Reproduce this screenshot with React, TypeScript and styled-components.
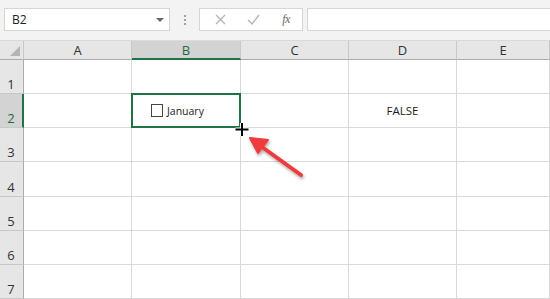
import React from "react";
import styled, { createGlobalStyle } from "styled-components";

const Global = createGlobalStyle`
  html, body { margin: 0; padding: 0; background: #ffffff; }
  body { font-family: "Segoe UI", "Open Sans", "Noto Sans", sans-serif; overflow: hidden; }
`;

const Page = styled.div`
  position: relative;
  width: 550px;
  height: 299px;
  overflow: hidden;
  background: #fff;
`;

const Toolbar = styled.div`
  height: 41px;
  background: #f3f3f3;
  display: flex;
  align-items: flex-start;
  padding: 8px 0 0 4px;
  box-sizing: border-box;
  border-bottom: 1px solid #dadada;
`;

const NameBox = styled.div`
  width: 166px;
  height: 23px;
  box-sizing: border-box;
  background: #fff;
  border: 1px solid #d6d6d6;
  display: flex;
  align-items: center;
  justify-content: space-between;
  padding: 0 5px 0 7px;
  font-size: 12px;
  color: #222;
`;

const Caret = styled.span`
  width: 0;
  height: 0;
  border-left: 4px solid transparent;
  border-right: 4px solid transparent;
  border-top: 4px solid #666;
`;

const Dots = styled.div`
  width: 29px;
  height: 23px;
  display: flex;
  flex-direction: column;
  align-items: center;
  justify-content: center;
  gap: 2px;
  span { width: 2px; height: 2px; background: #a0a0a0; display: block; }
`;

const ButtonsBox = styled.div`
  width: 104px;
  height: 23px;
  box-sizing: border-box;
  background: #fff;
  border: 1px solid #d6d6d6;
  display: flex;
  align-items: center;
  padding-left: 7px;
`;

const IconBtn = styled.div<{ $w: number }>`
  width: ${(p) => p.$w}px;
  height: 21px;
  display: flex;
  align-items: center;
  justify-content: center;
`;

const Fx = styled.span`
  font-family: "Liberation Serif", serif;
  font-style: italic;
  font-size: 12px;
  color: #666;
  letter-spacing: -0.5px;
`;

const FormulaInput = styled.div`
  flex: 1;
  height: 23px;
  margin-left: 4px;
  box-sizing: border-box;
  background: #fff;
  border: 1px solid #d6d6d6;
  border-right: none;
`;

const Grid = styled.div`
  display: grid;
  grid-template-columns: 24px 108px 109px 108px 108px 1fr;
  grid-template-rows: 19px 34px 34px 34px 35px 34px 34px 34px;
`;

const Corner = styled.div`
  position: relative;
  background: #e6e6e6;
  border-right: 1px solid #c8c8c8;
  border-bottom: 1px solid #ababab;
  box-sizing: border-box;
  &::after {
    content: "";
    position: absolute;
    right: 3px;
    bottom: 3px;
    width: 0;
    height: 0;
    border-left: 10px solid transparent;
    border-bottom: 10px solid #b5b5b5;
  }
`;

const ColHeader = styled.div<{ $sel?: boolean }>`
  background: ${(p) => (p.$sel ? "#d3d3d3" : "#e6e6e6")};
  border-right: 1px solid #c8c8c8;
  border-bottom: ${(p) => (p.$sel ? "2px solid #217346" : "1px solid #ababab")};
  box-sizing: border-box;
  display: flex;
  align-items: center;
  justify-content: center;
  font-size: 13px;
  color: ${(p) => (p.$sel ? "#1e6b41" : "#333")};
  padding-top: ${(p) => (p.$sel ? "1px" : "0")};
`;

const RowHeader = styled.div<{ $sel?: boolean }>`
  background: ${(p) => (p.$sel ? "#d3d3d3" : "#e6e6e6")};
  border-right: ${(p) => (p.$sel ? "2px solid #217346" : "1px solid #ababab")};
  border-bottom: 1px solid #c8c8c8;
  box-sizing: border-box;
  display: flex;
  align-items: flex-end;
  justify-content: center;
  padding-right: ${(p) => (p.$sel ? "0" : "1px")};
  font-size: 13px;
  color: ${(p) => (p.$sel ? "#1e6b41" : "#333")};
`;

const Cell = styled.div<{ $align?: string }>`
  position: relative;
  border-right: 1px solid #d9d9d9;
  border-bottom: 1px solid #d9d9d9;
  box-sizing: border-box;
  display: flex;
  align-items: center;
  justify-content: ${(p) => p.$align || "flex-start"};
  font-family: "Open Sans", "Liberation Sans", sans-serif;
  font-size: 11.5px;
  color: #1a1a1a;
`;

const Selection = styled.div`
  position: absolute;
  left: -1px;
  top: -1px;
  right: -1px;
  bottom: -1px;
  border: 2px solid #217346;
  pointer-events: none;
`;

const CheckWrap = styled.div`
  display: flex;
  align-items: center;
  gap: 4px;
  margin-left: 19px;
  font-size: 10.5px;
  color: #222;
`;

const Box = styled.span`
  width: 10px;
  height: 11px;
  border: 1px solid #444;
  display: block;
`;

const Overlay = styled.svg`
  position: absolute;
  left: 0;
  top: 0;
  pointer-events: none;
`;

const cols = ["A", "B", "C", "D", "E"];
const rows = [1, 2, 3, 4, 5, 6, 7];

export default function App() {
  return (
    <Page>
      <Global />
      <Toolbar>
        <NameBox>
          <span>B2</span>
          <Caret />
        </NameBox>
        <Dots>
          <span />
          <span />
          <span />
        </Dots>
        <ButtonsBox>
          <IconBtn $w={26}>
            <svg width="11" height="11" viewBox="0 0 11 11">
              <path d="M1 1 L10 10 M10 1 L1 10" stroke="#b4b4b4" strokeWidth="1.3" />
            </svg>
          </IconBtn>
          <IconBtn $w={40}>
            <svg width="13" height="11" viewBox="0 0 13 11">
              <path d="M1 6 L5 10 L12 1" stroke="#b4b4b4" strokeWidth="1.3" fill="none" />
            </svg>
          </IconBtn>
          <IconBtn $w={26}>
            <Fx>fx</Fx>
          </IconBtn>
        </ButtonsBox>
        <FormulaInput />
      </Toolbar>
      <Grid>
        <Corner />
        {cols.map((c) => (
          <ColHeader key={c} $sel={c === "B"}>
            {c}
          </ColHeader>
        ))}
        {rows.map((r) => (
          <React.Fragment key={r}>
            <RowHeader $sel={r === 2}>{r}</RowHeader>
            {cols.map((c) => {
              if (r === 2 && c === "B") {
                return (
                  <Cell key={c}>
                    <CheckWrap>
                      <Box />
                      <span>January</span>
                    </CheckWrap>
                    <Selection />
                  </Cell>
                );
              }
              if (r === 2 && c === "D") {
                return (
                  <Cell key={c} $align="center">
                    FALSE
                  </Cell>
                );
              }
              return <Cell key={c} />;
            })}
          </React.Fragment>
        ))}
      </Grid>
      <Overlay width="550" height="299" viewBox="0 0 550 299">
        <defs>
          <filter id="sh" x="-30%" y="-30%" width="160%" height="160%">
            <feDropShadow dx="1" dy="2" stdDeviation="1.5" floodColor="#000" floodOpacity="0.35" />
          </filter>
        </defs>
        <g filter="url(#sh)">
          <path d="M301 175 L262 147" stroke="#ee3b3b" strokeWidth="4" strokeLinecap="round" />
          <path d="M250 138 L268 140 L258 153 Z" fill="#ee3b3b" stroke="#ee3b3b" strokeWidth="2" strokeLinejoin="round" />
        </g>
        <g>
          <path d="M242 123 V136 M235.5 129.5 H248.5" stroke="#fff" strokeWidth="4" />
          <path d="M242 123 V136 M235.5 129.5 H248.5" stroke="#000" strokeWidth="2" />
        </g>
      </Overlay>
    </Page>
  );
}
